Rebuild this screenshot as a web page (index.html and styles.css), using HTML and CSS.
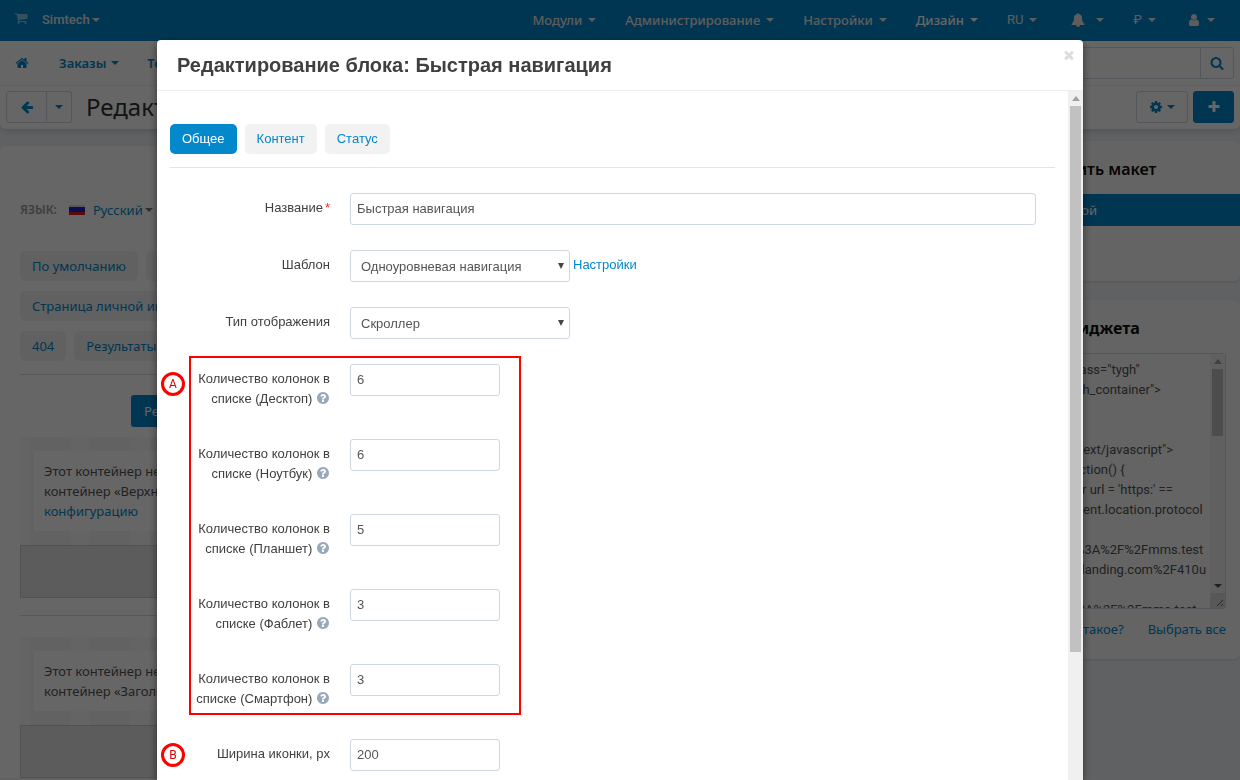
FILE: index.html
```html
<!DOCTYPE html>
<html lang="ru">
<head>
    <meta charset="UTF-8">
    <meta name="viewport" content="width=device-width, initial-scale=1.0">
    <title>Редактирование макета</title>
    <link rel="stylesheet" href="styles.css">
</head>
<body>
    <svg class="sprite" aria-hidden="true">
        <symbol id="i-cart" viewBox="0 0 1792 1792"><path d="M704 1536q0 52-38 90t-90 38-90-38-38-90 38-90 90-38 90 38 38 90zm896 0q0 52-38 90t-90 38-90-38-38-90 38-90 90-38 90 38 38 90zm128-1088v512q0 24-16.500 42.500t-40.500 21.500l-1044 122q13 60 13 70 0 16-24 64h920q26 0 45 19t19 45-19 45-45 19h-1024q-26 0-45-19t-19-45q0-11 8-31.500t16-36 21.500-40 15.500-29.500l-177-823h-204q-26 0-45-19t-19-45 19-45 45-19h256q16 0 28.500 6.500t19.500 15.500 13 24.500 8 26 5.500 29.500 4.500 26h1201q26 0 45 19t19 45z"/></symbol>
        <symbol id="i-home" viewBox="0 0 1792 1792"><path d="M1472 992v480q0 26-19 45t-45 19h-384v-384h-256v384h-384q-26 0-45-19t-19-45v-480q0-1 .5-3t.5-3l575-474 575 474q1 2 1 6zm223-69l-62 74q-8 9-21 11h-3q-13 0-21-7l-692-577-692 577q-12 8-24 7-13-2-21-11l-62-74q-8-10-7-23.500t11-21.500l719-599q32-26 76-26t76 26l244 204v-195q0-14 9-23t23-9h192q14 0 23 9t9 23v408l219 182q10 8 11 21.500t-7 23.500z"/></symbol>
        <symbol id="i-back" viewBox="0 0 1792 1792"><path d="M1664 896v128q0 53-32.500 90.500t-84.500 37.500h-704l293 294q38 36 38 90t-38 90l-75 76q-37 37-90 37-52 0-91-37l-651-652q-37-37-37-90 0-52 37-91l651-650q38-38 91-38 52 0 90 38l75 74q38 38 38 91t-38 91l-293 293h704q52 0 84.500 37.500t32.500 90.500z"/></symbol>
        <symbol id="i-search" viewBox="0 0 1792 1792"><path d="M1216 832q0-185-131.500-316.500t-316.500-131.500-316.500 131.500-131.500 316.500 131.500 316.500 316.500 131.500 316.500-131.500 131.500-316.500zm512 832q0 52-38 90t-90 38q-54 0-90-38l-343-342q-179 124-399 124-143 0-273.500-55.500t-225-150-150-225-55.500-273.500 55.500-273.500 150-225 225-150 273.500-55.500 273.500 55.500 225 150 150 225 55.500 273.500q0 220-124 399l343 343q37 37 37 90z"/></symbol>
        <symbol id="i-cog" viewBox="0 0 1792 1792"><path d="M1152 896q0-106-75-181t-181-75-181 75-75 181 75 181 181 75 181-75 75-181zm512-109v222q0 12-8 23t-20 13l-185 28q-19 54-39 91 35 50 107 138 10 12 10 25t-9 23q-27 37-99 108t-94 71q-12 0-26-9l-138-108q-44 23-91 38-16 136-29 186-7 28-36 28h-222q-14 0-24.500-8.500t-11.500-21.500l-28-184q-49-16-90-37l-141 107q-10 9-25 9-14 0-25-11-126-114-165-168-7-10-7-23 0-12 8-23 15-21 51-66.500t54-70.500q-27-50-41-99l-183-27q-13-2-21-12.500t-8-23.500v-222q0-12 8-23t19-13l186-28q14-46 39-92-40-57-107-138-10-12-10-24 0-10 9-23 26-36 98.500-107.500t94.500-71.500q13 0 26 10l138 107q44-23 91-38 16-136 29-186 7-28 36-28h222q14 0 24.500 8.500t11.500 21.500l28 184q49 16 90 37l142-107q9-9 24-9 13 0 25 10 129 119 165 170 7 8 7 22 0 12-8 23-15 21-51 66.500t-54 70.500q26 50 41 98l183 28q13 2 21 12.500t8 23.500z"/></symbol>
        <symbol id="i-plus" viewBox="0 0 1792 1792"><path d="M1600 736v192q0 40-28 68t-68 28h-416v416q0 40-28 68t-68 28h-192q-40 0-68-28t-28-68v-416h-416q-40 0-68-28t-28-68v-192q0-40 28-68t68-28h416v-416q0-40 28-68t68-28h192q40 0 68 28t28 68v416h416q40 0 68 28t28 68z"/></symbol>
        <symbol id="i-bell" viewBox="0 0 1792 1792"><path d="M912 1696q0-16-16-16-59 0-101.500-42.500t-42.500-101.500q0-16-16-16t-16 16q0 73 51.500 124.500t124.500 51.500q16 0 16-16zm816-288q0 52-38 90t-90 38h-448q0 106-75 181t-181 75-181-75-75-181h-448q-52 0-90-38t-38-90q50-42 91-88t85-119.500 74.500-158.500 50-206 19.500-260q0-152 117-282.500t307-158.500q-8-19-8-39 0-40 28-68t68-28 68 28 28 68q0 20-8 39 190 28 307 158.500t117 282.500q0 139 19.500 260t50 206 74.500 158.500 85 119.500 91 88z"/></symbol>
        <symbol id="i-user" viewBox="0 0 1792 1792"><path d="M1536 1399q0 109-62.500 187t-150.500 78h-854q-88 0-150.500-78t-62.500-187q0-85 8.500-160.500t31.500-152 58.500-131 94-89 134.500-34.500q131 128 313 128t313-128q76 0 134.500 34.500t94 89 58.500 131 31.500 152 8.500 160.500zm-256-887q0 159-112.500 271.500t-271.500 112.500-271.500-112.500-112.500-271.500 112.500-271.500 271.500-112.500 271.500 112.500 112.500 271.500z"/></symbol>
        <symbol id="i-times" viewBox="0 0 1792 1792"><path d="M1490 1322q0 40-28 68l-136 136q-28 28-68 28t-68-28l-294-294-294 294q-28 28-68 28t-68-28l-136-136q-28-28-28-68t28-68l294-294-294-294q-28-28-28-68t28-68l136-136q28-28 68-28t68 28l294 294 294-294q28-28 68-28t68 28l136 136q28 28 28 68t-28 68l-294 294 294 294q28 28 28 68z"/></symbol>
        <symbol id="i-help" viewBox="0 0 1792 1792"><path d="M1024 1376v-192q0-14-9-23t-23-9h-192q-14 0-23 9t-9 23v192q0 14 9 23t23 9h192q14 0 23-9t9-23zm256-672q0-88-55.500-163t-138.500-116-170-41q-243 0-371 213-15 24 8 42l132 100q7 6 19 6 16 0 25-12 53-68 86-92 34-24 86-24 48 0 85.500 26t37.500 59q0 38-20 61t-68 45q-63 28-115.500 86.500t-52.500 125.500v36q0 14 9 23t23 9h192q14 0 23-9t9-23q0-19 21.500-49.500t54.500-49.500q32-18 49-28.500t46-35 44.500-48 28-60.500 12.500-81zm384 192q0 209-103 385.500t-279.500 279.500-385.500 103-385.500-103-279.500-279.500-103-385.500 103-385.500 279.500-279.500 385.500-103 385.500 103 279.500 279.500 103 385.500z"/></symbol>
    </svg>

    <header class="header">
        <nav class="topbar">
            <a class="cart" href="#" aria-label="Магазин"><svg class="icon"><use href="#i-cart"/></svg></a>
            <a class="brand" href="#">Simtech<span class="caret"></span></a>
            <ul class="top-menu">
                <li><a href="#">Модули<span class="caret"></span></a></li>
                <li><a href="#">Администрирование<span class="caret"></span></a></li>
                <li><a href="#">Настройки<span class="caret"></span></a></li>
                <li><a class="active" href="#">Дизайн<span class="caret"></span></a></li>
                <li><a class="latin" href="#">RU<span class="caret"></span></a></li>
                <li><a class="bell" href="#" aria-label="Уведомления"><svg class="icon"><use href="#i-bell"/></svg><span class="caret"></span></a></li>
                <li><a class="latin" href="#">₽<span class="caret"></span></a></li>
                <li><a class="user" href="#" aria-label="Профиль"><svg class="icon"><use href="#i-user"/></svg><span class="caret"></span></a></li>
            </ul>
        </nav>
        <nav class="subnav">
            <a class="home" href="#" aria-label="Главная"><svg class="icon"><use href="#i-home"/></svg></a>
            <a href="#">Заказы<span class="caret"></span></a>
            <a href="#">Товары<span class="caret"></span></a>
            <form class="search">
                <input type="text" aria-label="Поиск">
                <button type="button" aria-label="Найти"><svg class="icon"><use href="#i-search"/></svg></button>
            </form>
        </nav>
        <div class="actions">
            <div class="btn-group">
                <button type="button" class="btn back" aria-label="Назад"><svg class="icon"><use href="#i-back"/></svg></button>
                <button type="button" class="btn drop" aria-label="История"><span class="caret"></span></button>
            </div>
            <h1>Редактирование макета</h1>
            <button type="button" class="btn gear" aria-label="Настройки"><svg class="icon"><use href="#i-cog"/></svg><span class="caret"></span></button>
            <button type="button" class="btn add" aria-label="Добавить"><svg class="icon"><use href="#i-plus"/></svg></button>
        </div>
    </header>

    <div class="page">
        <main class="content">
            <div class="language">
                <span class="language-label">язык:</span>
                <span class="flag"></span>
                <a href="#">Русский</a><span class="caret"></span>
            </div>
            <ul class="chips">
                <li><a href="#">По умолчанию</a></li>
                <li><a href="#">Домашняя страница</a></li>
            </ul>
            <ul class="chips">
                <li><a href="#">Страница личной информации</a></li>
            </ul>
            <ul class="chips">
                <li><a href="#">404</a></li>
                <li><a href="#">Результаты поиска</a></li>
            </ul>
            <hr>
            <button type="button" class="device">Редактировать</button>
            <section class="container">
                <div class="grid-area">
                    <p>Этот контейнер не настроен.<br>контейнер «Верхняя панель»<br><a href="#">конфигурацию</a></p>
                </div>
                <div class="container-bar"></div>
            </section>
            <section class="container">
                <div class="grid-area">
                    <p>Этот контейнер не настроен.<br>контейнер «Заголовок»</p>
                </div>
                <div class="container-bar"></div>
            </section>
        </main>
        <aside class="sidebar">
            <section class="side-panel layouts">
                <h2>Сменить макет</h2>
                <a class="layout-link" href="#">Основной</a>
            </section>
            <section class="side-panel">
                <h2>Код виджета</h2>
                <div class="code">
                    <textarea aria-label="Код виджета" readonly>&lt;div class="tygh"
id="tygh_container"&gt;
&lt;/div&gt;
&lt;script
type="text/javascript"&gt;
    (function() {
        var url = 'https:' ==
document.location.protocol
?
'https%3A%2F%2Fmms.test
ing.us-landing.com%2F410u
:
'http%3A%2F%2Fmms.test</textarea>
                    <div class="scrollbar code-scroll">
                        <span class="arrow up"></span>
                        <span class="thumb"></span>
                        <span class="arrow down"></span>
                        <svg class="grip" viewBox="0 0 15 15"><path d="M7 13l6-6M11 13l2-2"/></svg>
                    </div>
                </div>
                <div class="side-links">
                    <a href="#">Что это такое?</a>
                    <a href="#">Выбрать все</a>
                </div>
            </section>
        </aside>
    </div>

    <div class="backdrop"></div>

    <div class="modal" role="dialog" aria-labelledby="modal-title">
        <div class="modal-header">
            <h3 id="modal-title">Редактирование блока: Быстрая навигация</h3>
            <button type="button" class="close" aria-label="Закрыть"><svg class="icon"><use href="#i-times"/></svg></button>
        </div>
        <div class="modal-main">
            <div class="modal-body">
                <div class="tabs">
                    <button type="button" class="tab active">Общее</button>
                    <button type="button" class="tab">Контент</button>
                    <button type="button" class="tab">Статус</button>
                </div>
                <form class="form">
                    <div class="field">
                        <label for="name">Название<span class="required">*</span></label>
                        <input type="text" id="name" class="wide" value="Быстрая навигация">
                    </div>
                    <div class="field">
                        <label for="template">Шаблон</label>
                        <div class="control">
                            <span class="select"><select id="template"><option>Одноуровневая навигация</option></select></span>
                            <a href="#">Настройки</a>
                        </div>
                    </div>
                    <div class="field">
                        <label for="display">Тип отображения</label>
                        <div class="control">
                            <span class="select"><select id="display"><option>Скроллер</option></select></span>
                        </div>
                    </div>
                    <div class="marked">
                        <span class="marker">A</span>
                        <div class="field">
                            <label for="desktop">Количество колонок в списке (Десктоп) <svg class="help"><use href="#i-help"/></svg></label>
                            <input type="text" id="desktop" value="6">
                        </div>
                        <div class="field">
                            <label for="laptop">Количество колонок в списке (Ноутбук) <svg class="help"><use href="#i-help"/></svg></label>
                            <input type="text" id="laptop" value="6">
                        </div>
                        <div class="field">
                            <label for="tablet">Количество колонок в списке (Планшет) <svg class="help"><use href="#i-help"/></svg></label>
                            <input type="text" id="tablet" value="5">
                        </div>
                        <div class="field">
                            <label for="phablet">Количество колонок в списке (Фаблет) <svg class="help"><use href="#i-help"/></svg></label>
                            <input type="text" id="phablet" value="3">
                        </div>
                        <div class="field">
                            <label for="phone">Количество колонок в списке (Смартфон) <svg class="help"><use href="#i-help"/></svg></label>
                            <input type="text" id="phone" value="3">
                        </div>
                    </div>
                    <div class="field">
                        <span class="marker single">B</span>
                        <label for="icon-width">Ширина иконки, px</label>
                        <input type="text" id="icon-width" value="200">
                    </div>
                </form>
            </div>
            <div class="scrollbar modal-scroll">
                <span class="arrow up"></span>
                <span class="thumb"></span>
            </div>
        </div>
    </div>
</body>
</html>
```
FILE: styles.css
```css
*, *::before {
    box-sizing: border-box;
}
html, body {
    height: 100%;
}
body {
    margin: 0;
    overflow: hidden;
    background: #eef3f8;
    color: #333;
    font-family: "Noto Sans", "Open Sans", sans-serif;
    font-size: 13px;
    line-height: 20px;
}
a {
    color: #0388cc;
    text-decoration: none;
}
ul {
    list-style: none;
    margin: 0;
    padding: 0;
}
button, input, select, textarea {
    font: inherit;
    margin: 0;
}
button {
    cursor: pointer;
}
.sprite {
    display: none;
}
.icon {
    width: 14px;
    height: 14px;
    fill: currentColor;
    flex: none;
}
.caret {
    display: inline-block;
    flex: none;
    border: 4px solid transparent;
    border-top-color: currentColor;
    border-bottom: 0;
}

/* Header */
.header {
    background: #fff;
    border-radius: 0 0 6px 6px;
    box-shadow: 0 2px 6px rgba(0, 0, 0, 0.15);
}
.topbar {
    display: flex;
    align-items: center;
    height: 41px;
    padding: 0 25px 1px 14px;
    background: #0388cc;
}
.topbar a {
    display: flex;
    align-items: center;
    height: 20px;
    color: #e8e8e8;
    font-weight: 500;
}
.topbar .active {
    color: #fff;
}
.topbar .cart {
    color: #8cc8e8;
    padding-bottom: 4px;
}
.topbar .brand {
    margin-left: 14px;
    font-family: Roboto, sans-serif;
}
.brand .caret {
    margin-left: 2px;
}
.top-menu {
    display: flex;
    gap: 29px;
    margin-left: auto;
}
.top-menu .caret {
    margin-left: 6px;
}
.topbar .latin {
    font-family: Roboto, sans-serif;
    font-weight: 400;
}
.top-menu .bell {
    padding-left: 5px;
}
.top-menu .bell .caret {
    margin-left: 11px;
}
.top-menu .user {
    padding-left: 2px;
}
.subnav {
    display: flex;
    align-items: center;
    height: 45px;
    padding: 0 6px 0 15px;
    border-bottom: 1px solid #f0f0f0;
}
.subnav a {
    display: flex;
    align-items: center;
    margin-right: 28px;
    font-weight: 600;
}
.subnav .home {
    margin-right: 30px;
}
.subnav .caret {
    margin-left: 5px;
}
.search {
    display: flex;
    width: 300px;
    height: 32px;
    margin-left: auto;
}
.search input {
    flex: 1;
    min-width: 0;
    border: 1px solid #cfd8e2;
    border-radius: 3px 0 0 3px;
    background: #fff;
}
.search button {
    display: flex;
    align-items: center;
    justify-content: center;
    width: 33px;
    padding: 0;
    border: 1px solid #cfd8e2;
    border-left: 0;
    border-radius: 0 3px 3px 0;
    background: #fff;
    color: #0388cc;
}
.actions {
    display: flex;
    align-items: center;
    height: 43px;
    padding: 0 6px 1px;
}
.actions h1 {
    flex: 1;
    margin: 0 0 0 14px;
    font-size: 24px;
    font-weight: 400;
    line-height: 30px;
}
.btn-group {
    display: flex;
}
.btn {
    display: flex;
    align-items: center;
    justify-content: center;
    height: 32px;
    padding: 0;
    border: 1px solid #cfd8e2;
    border-radius: 3px;
    background: #fff;
    color: #0388cc;
}
.btn.back {
    width: 41px;
    border-radius: 3px 0 0 3px;
}
.btn.drop {
    width: 25px;
    border-left: 0;
    border-radius: 0 3px 3px 0;
}
.btn.gear {
    width: 52px;
    gap: 4px;
}
.btn.add {
    width: 41px;
    margin-left: 5px;
    border-color: #0388cc;
    background: #0388cc;
    color: #fff;
}

/* Page */
.page {
    display: grid;
    grid-template-columns: 1fr 220px;
    gap: 20px;
    padding-top: 12px;
}
.content {
    margin-top: 5px;
    padding: 54px 20px 0;
    border-radius: 6px 6px 0 0;
    background: #fff;
}
.language {
    display: flex;
    align-items: center;
    margin-bottom: 31px;
}
.language-label {
    color: #999;
    font-weight: 600;
    text-transform: uppercase;
    font-size: 12px;
}
.flag {
    width: 16px;
    height: 10px;
    margin: 0 8px 0 12px;
    background: linear-gradient(#ddd 0 20%, #22c 20% 70%, #d22 70%);
}
.language .caret {
    margin-left: 2px;
    color: #777;
}
.chips {
    display: flex;
    gap: 8px;
    margin-bottom: 10px;
}
.chips a {
    display: block;
    padding: 5px 12px;
    border-radius: 6px;
    background: #f2f2f2;
    white-space: nowrap;
}
.content hr {
    margin: 13px 0 20px;
    border: 0;
    border-top: 1px solid #ddd;
}
.device {
    display: block;
    height: 32px;
    margin: 0 0 10px 111px;
    padding: 0 13px;
    border: 0;
    border-radius: 3px;
    background: #0388cc;
    color: #fff;
}
.container + .container {
    margin-top: 17px;
    padding-top: 21px;
    border-top: 1px solid #ddd;
}
.grid-area {
    padding: 14px;
    background: repeating-linear-gradient(90deg, #fafafa 0 10px, #f4f4f4 10px 50px, #fafafa 50px 60px);
}
.grid-area p {
    margin: 0;
    padding: 10px;
    background: #fff;
    color: #555;
}
.container-bar {
    height: 53px;
    border: 1px solid #ccc;
    background: #e6e6e6;
}

/* Sidebar */
.side-panel {
    margin-bottom: 19px;
    padding: 18px 14px 20px;
    border-radius: 6px;
    background: #fafafa;
    box-shadow: 0 1px 3px rgba(0, 0, 0, 0.12);
}
.side-panel h2 {
    margin: 0 0 15px;
    color: #111;
    font-size: 16px;
    font-weight: 700;
    line-height: 20px;
}
.side-panel.layouts {
    padding-bottom: 55px;
}
.layouts h2 {
    font-weight: 600;
}
.layout-link {
    display: block;
    margin: 0 -14px;
    padding: 6px 14px;
    background: #0388cc;
    color: #fff;
}
.code {
    display: flex;
    height: 256px;
    border: 1px solid #cfd8e2;
    border-radius: 3px;
}
.code textarea {
    flex: 1;
    min-width: 0;
    padding: 6px 0 6px 8px;
    border: 0;
    background: transparent;
    color: #555;
    font-family: Roboto, sans-serif;
    line-height: 20px;
    white-space: pre;
    overflow: hidden;
    resize: none;
}
.side-links {
    display: flex;
    justify-content: space-between;
    margin-top: 10px;
    white-space: nowrap;
}

/* Scrollbars */
.scrollbar {
    display: flex;
    flex-direction: column;
    align-items: center;
    flex: none;
    width: 15px;
    background: #f0f0f0;
}
.arrow {
    flex: none;
    width: 8px;
    margin: 5px 0;
    border: 4px solid transparent;
}
.arrow.up {
    border-top: 0;
    border-bottom: 5px solid #a0a0a0;
}
.arrow.down {
    margin-top: auto;
    border-bottom: 0;
    border-top: 4px solid #505050;
}
.thumb {
    width: 11px;
    background: #c1c1c1;
}
.code-scroll .thumb {
    height: 67px;
}
.modal-scroll .thumb {
    height: 546px;
}
.grip {
    width: 15px;
    height: 15px;
    background: #dcdcdc;
    stroke: #555;
    flex: none;
}

/* Modal */
.backdrop {
    position: fixed;
    inset: 0;
    background: rgba(0, 0, 0, 0.6);
}
.modal {
    position: fixed;
    top: 40px;
    bottom: 0;
    left: 157px;
    right: 157px;
    display: flex;
    flex-direction: column;
    border-radius: 4px 4px 0 0;
    background: #fff;
    box-shadow: 0 3px 9px rgba(0, 0, 0, 0.5);
    color: #404040;
    font-family: "Liberation Sans", Arial, sans-serif;
}
.modal-header {
    display: flex;
    justify-content: space-between;
    align-items: flex-start;
    padding: 8px 7px 8px 20px;
    border-bottom: 1px solid #eee;
}
.modal-header h3 {
    margin: 0;
    font-size: 20px;
    line-height: 34px;
}
.close {
    display: flex;
    padding: 0;
    border: 0;
    background: none;
    color: #ddd;
}
.modal-main {
    display: flex;
    flex: 1;
    min-height: 0;
}
.modal-body {
    flex: 1;
    overflow: hidden;
    padding: 33px 13px 0;
}
.tabs {
    display: flex;
    gap: 8px;
    padding-bottom: 13px;
    border-bottom: 1px solid #e3e3ea;
}
.tab {
    height: 30px;
    padding: 0 12px;
    border: 0;
    border-radius: 5px;
    background: #f2f2f2;
    color: #0388cc;
}
.tab.active {
    background: #0388cc;
    color: #fff;
}
.form {
    padding: 25px 19px 0 0;
}
.field {
    position: relative;
    display: grid;
    grid-template-columns: 160px 1fr;
    align-items: start;
    gap: 20px;
    margin-bottom: 25px;
}
.field label {
    padding: 5px 0;
    text-align: right;
    margin-bottom: -3px;
}
.marked label {
    margin-bottom: 0;
}
.field input {
    width: 150px;
    height: 32px;
    padding: 0 6px 2px;
    border: 1px solid #cfd8e2;
    border-radius: 3px;
    background: #fff;
    color: #555;
}
.field .wide {
    width: 100%;
}
.required {
    margin-left: 2px;
    color: #e33;
}
.control {
    display: flex;
    gap: 3px;
}
.control a {
    padding: 5px 0;
}
.select {
    position: relative;
    width: 220px;
}
.select select {
    display: block;
    width: 100%;
    height: 32px;
    padding: 2px 10px 0;
    border: 1px solid #cfd8e2;
    border-radius: 3px;
    background: #fff;
    color: #555;
    appearance: none;
}
.select::after {
    content: "";
    position: absolute;
    top: 13px;
    right: 6px;
    border: 3px solid transparent;
    border-top: 6px solid #444;
    border-bottom: 0;
}
.help {
    width: 14px;
    height: 14px;
    fill: #98a9ba;
    vertical-align: -2px;
}

/* Red callouts over the form */
.marked {
    position: relative;
}
.marked::before {
    content: "";
    position: absolute;
    top: -8px;
    bottom: -1px;
    left: 19px;
    width: 332px;
    border: 2px solid #f00;
    pointer-events: none;
}
.marker {
    position: absolute;
    top: 8px;
    left: -9px;
    display: flex;
    align-items: center;
    justify-content: center;
    width: 24px;
    height: 24px;
    border: 3px solid #f00;
    border-radius: 50%;
    color: #d00;
    font-family: Roboto, sans-serif;
    font-size: 12px;
    font-weight: 400;
}
.marker.single {
    top: 4px;
}
```
